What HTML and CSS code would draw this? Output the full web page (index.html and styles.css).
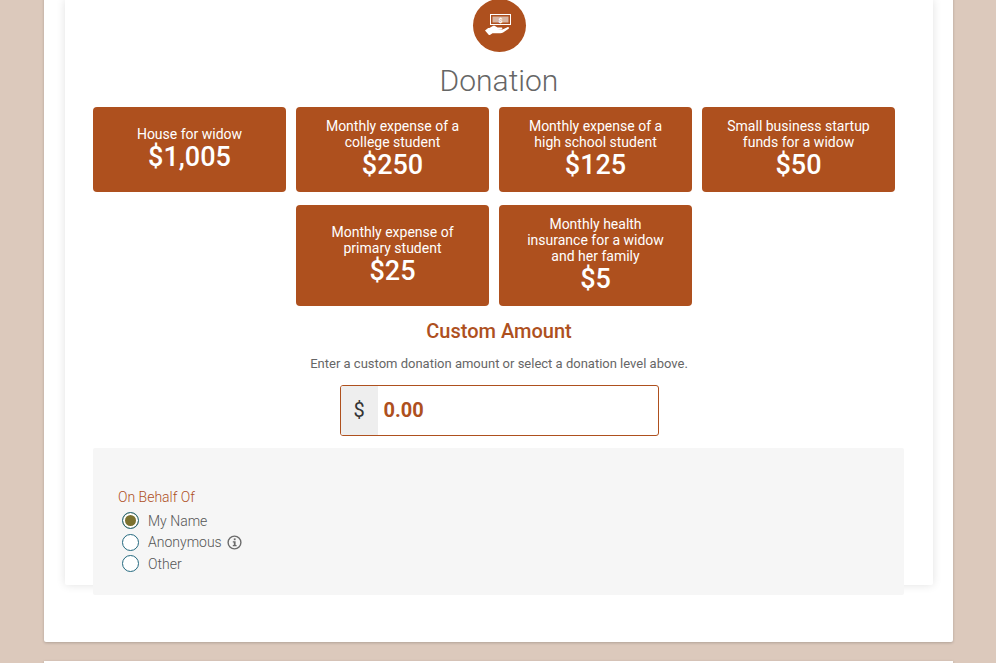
FILE: index.html
```html
<!DOCTYPE html>
<html lang="en">
<head>
    <meta charset="UTF-8">
    <meta name="viewport" content="width=device-width, initial-scale=1.0">
    <title>Donation</title>
    <link rel="stylesheet" href="styles.css">
</head>
<body>
    <div class="sheet">
        <div class="donation-card">
            <div class="badge">
                <svg width="30" height="26" viewBox="0 0 30 26">
                    <rect x="6.5" y="1.5" width="20" height="10" fill="none" stroke="#fff" stroke-width="1"/>
                    <rect x="8.5" y="3.5" width="16" height="6" fill="#d8b4a0"/>
                    <text x="16.5" y="9.6" class="badge-dollar" text-anchor="middle">$</text>
                    <path d="M1 17.5l3.2-2.6 1.2.2 3-1.8c1-.6 2-.6 3 0l2.2 1.1h4c1 0 1.3 1.4 0 1.8l-4 .5 4.8-.2 5-2.3c1.2-.5 2.3.7 1.2 1.6l-5.5 3.7c-.8.5-1.6.8-2.6.8h-8l-2.6 1.8-1-.1z" fill="#fff"/>
                </svg>
            </div>
            <h1 class="title">Donation</h1>

            <div class="levels">
                <div class="level">
                    <span class="level-name">House for widow</span>
                    <span class="level-price">$1,005</span>
                </div>
                <div class="level">
                    <span class="level-name">Monthly expense of a college student</span>
                    <span class="level-price">$250</span>
                </div>
                <div class="level">
                    <span class="level-name">Monthly expense of a high school student</span>
                    <span class="level-price">$125</span>
                </div>
                <div class="level">
                    <span class="level-name">Small business startup funds for a widow</span>
                    <span class="level-price">$50</span>
                </div>
                <div class="level">
                    <span class="level-name">Monthly expense of primary student</span>
                    <span class="level-price">$25</span>
                </div>
                <div class="level">
                    <span class="level-name">Monthly health insurance for a widow and her family</span>
                    <span class="level-price">$5</span>
                </div>
            </div>

            <h2 class="custom-title">Custom Amount</h2>
            <p class="custom-hint">Enter a custom donation amount or select a donation level above.</p>
            <div class="amount">
                <span class="amount-addon">$</span>
                <span class="amount-value">0.00</span>
            </div>

            <div class="behalf">
                <div class="behalf-label">On Behalf Of</div>
                <div class="radio-row"><span class="radio checked"></span>My Name</div>
                <div class="radio-row"><span class="radio"></span>Anonymous
                    <svg class="info" width="15" height="15" viewBox="0 0 15 15">
                        <circle cx="7.5" cy="7.5" r="6.4" fill="none" stroke="#6b6b6b" stroke-width="1.4"/>
                        <rect x="6.8" y="3.4" width="1.8" height="1.8" fill="#6b6b6b"/>
                        <path d="M5.8 6.3h2.8v3.7h1v1.2h-3.8v-1.2h1v-2.5h-1z" fill="#6b6b6b"/>
                    </svg>
                </div>
                <div class="radio-row"><span class="radio"></span>Other</div>
            </div>
        </div>
    </div>
    <div class="sheet-next"></div>
</body>
</html>
```

FILE: styles.css
```css
html, body {
    height: 663px;
    overflow: hidden;
}
body {
    margin: 0;
    background-color: #dcc9bc;
    font-family: Roboto, "Liberation Sans", sans-serif;
    color: #666;
}
.sheet {
    box-sizing: border-box;
    width: 909px;
    height: 662px;
    margin: -20px 0 0 44px;
    padding: 37px 20px 0 21px;
    background-color: #fff;
    border-radius: 2px;
    box-shadow: 0 1px 3px rgba(0, 0, 0, 0.2);
}
.sheet-next {
    width: 909px;
    height: 40px;
    margin: 19px 0 0 44px;
    background-color: #fff;
    box-shadow: 0 1px 3px rgba(0, 0, 0, 0.2);
}
.donation-card {
    box-sizing: border-box;
    height: 586px;
    padding: 0 28px;
    background-color: #fff;
    border-radius: 2px;
    box-shadow: 0 0 10px rgba(0, 0, 0, 0.12);
}
.badge {
    display: flex;
    align-items: center;
    justify-content: center;
    width: 53px;
    height: 53px;
    margin: -18px auto 0;
    border-radius: 50%;
    background-color: #ae501e;
}
.badge-dollar {
    font-size: 7px;
    font-weight: 700;
    fill: #fff;
}
.title {
    margin: 11px 0 9px;
    font-size: 30px;
    line-height: 35px;
    font-weight: 300;
    text-align: center;
    color: #666;
}
.levels {
    display: flex;
    flex-wrap: wrap;
    justify-content: center;
    width: 812px;
}
.level {
    box-sizing: border-box;
    display: flex;
    flex-direction: column;
    justify-content: center;
    width: 193px;
    margin: 0 10px 13px 0;
    padding: 11px 22px;
    background-color: #ae501e;
    border-radius: 4px;
    color: #fff;
    text-align: center;
}
.level-name {
    font-size: 14px;
    line-height: 16px;
}
.level-price {
    font-size: 27px;
    line-height: 31px;
    font-weight: 500;
}
.custom-title {
    margin: 0;
    font-size: 20px;
    line-height: 24px;
    font-weight: 500;
    text-align: center;
    color: #ae501e;
}
.custom-hint {
    margin: 13px 0 0;
    font-size: 13px;
    line-height: 16px;
    text-align: center;
    color: #666;
}
.amount {
    box-sizing: border-box;
    display: flex;
    width: 319px;
    height: 51px;
    margin: 13px auto 12px;
    border: 1px solid #ae501e;
    border-radius: 3px;
    overflow: hidden;
}
.amount-addon {
    width: 37px;
    background-color: #eee;
    font-size: 20px;
    line-height: 49px;
    text-align: center;
    color: #333;
}
.amount-value {
    padding-left: 6px;
    font-size: 20px;
    line-height: 49px;
    font-weight: 700;
    color: #ae501e;
}
.behalf {
    box-sizing: border-box;
    width: 811px;
    height: 147px;
    padding: 41px 25px 0;
    background-color: #f6f6f6;
    border-radius: 2px;
    font-size: 14px;
    font-weight: 300;
}
.behalf-label {
    line-height: 17px;
    margin-bottom: 4px;
    color: #ae501e;
}
.radio-row {
    display: flex;
    align-items: center;
    height: 21.5px;
    padding-left: 4px;
    color: #555;
}
.radio {
    box-sizing: border-box;
    width: 17px;
    height: 17px;
    margin-right: 9px;
    border: 1.5px solid #24697f;
    border-radius: 50%;
    background-color: #fff;
}
.radio.checked {
    background-color: #7c7230;
    box-shadow: inset 0 0 0 2px #fff;
}
.info {
    margin-left: 5px;
}
```
